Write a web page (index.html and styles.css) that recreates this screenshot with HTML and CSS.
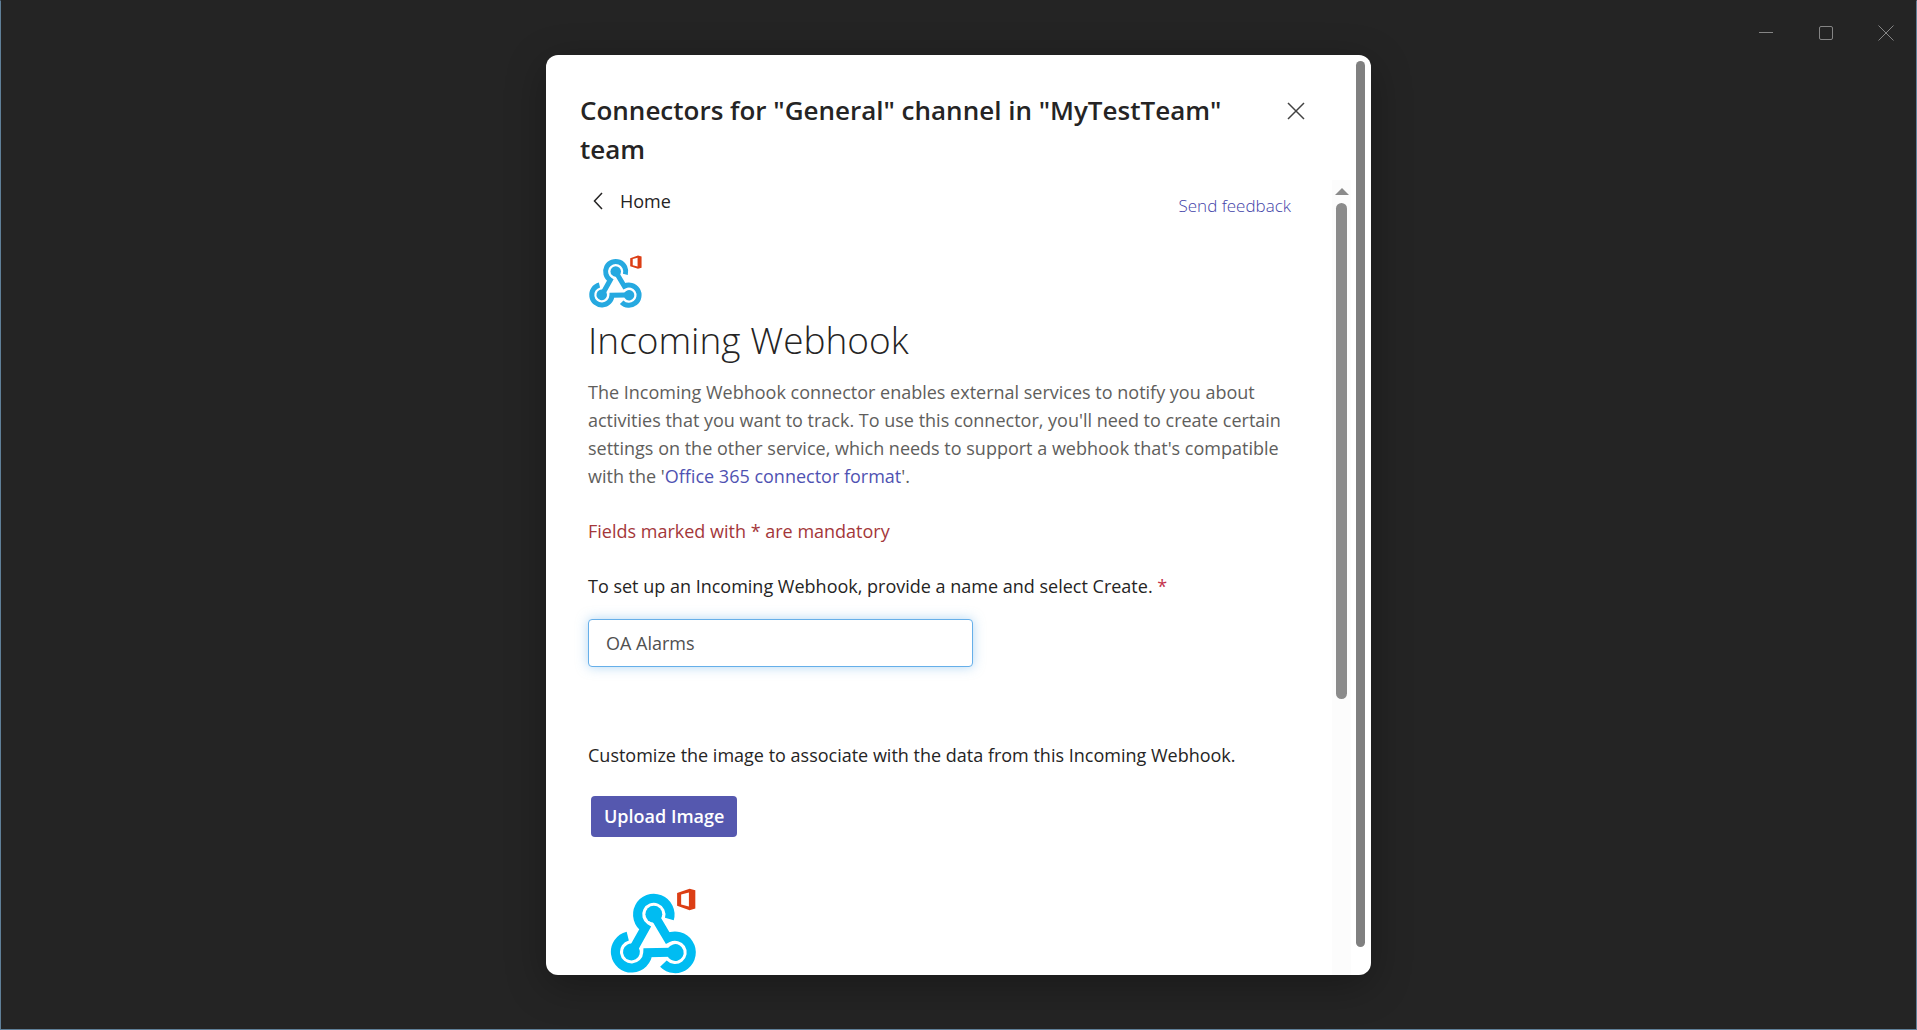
FILE: index.html
```html
<!DOCTYPE html>
<html lang="en">
<head>
<meta charset="utf-8">
<meta name="viewport" content="width=device-width, initial-scale=1">
<title>Connectors</title>
<link rel="stylesheet" href="styles.css">
</head>
<body>
<svg class="sprite" aria-hidden="true">
  <symbol id="webhook" viewBox="92 57 258 258">
    <g fill="none" stroke="currentColor">
      <g id="hook">
        <path d="M268 149A48 48 0 1 0 196 176L163 235"/>
        <circle cx="222" cy="135" r="25" fill="currentColor" stroke="none"/>
      </g>
      <use href="#hook" transform="rotate(-120 221 210)"/>
      <use href="#hook" transform="rotate(120 221 210)"/>
    </g>
    <path fill="#dc3e15" fill-rule="evenodd" d="M291 72L328 59L345 64V118L328 123L291 110ZM303 76V106L326 112V70Z"/>
  </symbol>
</svg>
<div class="window">
  <div class="window-controls">
    <button type="button" aria-label="Minimize"><svg viewBox="0 0 16 16"><path d="M1 7.5H15"/></svg></button>
    <button type="button" aria-label="Maximize"><svg viewBox="0 0 16 16"><rect x="1.5" y="1.5" width="13" height="13" rx="1.5"/></svg></button>
    <button type="button" aria-label="Close window"><svg viewBox="0 0 16 16"><path d="M.5 .5L15.5 15.5M15.5 .5L.5 15.5"/></svg></button>
  </div>
  <main class="dialog" role="dialog" aria-labelledby="title">
    <div class="dialog-main">
      <header class="dialog-header">
        <h1 id="title">Connectors for "General" channel in "MyTestTeam" team</h1>
        <button class="close" type="button" aria-label="Close"><svg viewBox="0 0 18 18"><path d="M1 1L17 17M17 1L1 17"/></svg></button>
      </header>
      <div class="viewport">
        <div class="content">
          <nav class="topline">
            <a class="home" href="#"><svg viewBox="0 0 10 18"><path d="M9 1L1.5 9L9 17"/></svg>Home</a>
            <a class="feedback" href="#">Send feedback</a>
          </nav>
          <svg class="logo" role="img" aria-label="Webhook"><use href="#webhook"/></svg>
          <h2>Incoming Webhook</h2>
          <p class="intro">The Incoming Webhook connector enables external services to notify you about activities that you want to track. To use this connector, you'll need to create certain settings on the other service, which needs to support a webhook that's compatible with the '<a href="#">Office 365 connector format</a>'.</p>
          <p class="mandatory">Fields marked with * are mandatory</p>
          <label for="name">To set up an Incoming Webhook, provide a name and select Create. <span class="star">*</span></label>
          <input id="name" type="text" value="OA Alarms">
          <p class="customize">Customize the image to associate with the data from this Incoming Webhook.</p>
          <button class="upload" type="button">Upload Image</button>
          <svg class="preview" role="img" aria-label="Webhook image"><use href="#webhook"/></svg>
        </div>
        <div class="track"><span class="arrow"></span><span class="thumb"></span></div>
      </div>
    </div>
    <div class="outer-thumb"></div>
  </main>
</div>
</body>
</html>
```
FILE: styles.css
```css
* { box-sizing: border-box; }
body {
  margin: 0;
  font-family: "Open Sans", "Noto Sans", sans-serif;
  font-size: 18px;
  line-height: 28px;
  color: #252424;
}
h1, h2, p { margin: 0; }
a { color: #4f52b2; text-decoration: none; }
button { font: inherit; border: 0; background: none; padding: 0; cursor: pointer; }
svg { display: block; }
.sprite { position: absolute; width: 0; height: 0; }

.window {
  position: relative;
  height: 100vh;
  display: flex;
  justify-content: center;
  padding: 54px 16px;
  background: #242424;
  border: 1px solid #5f7f98;
  border-top-color: #242424;
}
.window-controls {
  position: absolute;
  top: 24px;
  right: 22px;
  display: flex;
  gap: 44px;
}
.window-controls svg { width: 16px; height: 16px; fill: none; stroke: #858585; }

.dialog {
  width: 100%;
  max-width: 825px;
  display: flex;
  overflow: hidden;
  background: #fff;
  border-radius: 12px;
  box-shadow: 0 10px 40px rgba(0, 0, 0, .3);
}
.outer-thumb {
  flex: none;
  width: 9px;
  margin: 6px 6px 28px 5px;
  border-radius: 5px;
  background: #808080;
}
.dialog-main { flex: 1; min-width: 0; display: flex; flex-direction: column; }
.dialog-header {
  display: flex;
  justify-content: space-between;
  align-items: flex-start;
  padding: 36px 46px 11px 34px;
}
h1 { font-size: 26px; line-height: 39px; font-weight: 600; max-width: 660px; }
.close { padding: 11px 0; }
.close svg { width: 18px; height: 18px; fill: none; stroke: #424242; stroke-width: 1.5; }

.viewport { flex: 1; min-height: 0; display: flex; }
.content {
  flex: 1;
  min-width: 0;
  overflow: hidden;
  display: flex;
  flex-direction: column;
  align-items: flex-start;
  padding: 7px 41px 0 42px;
}
.topline {
  align-self: stretch;
  display: flex;
  justify-content: space-between;
  align-items: flex-start;
  margin-bottom: 35px;
}
.home { display: flex; align-items: center; gap: 17px; padding-left: 5px; color: #252424; }
.home svg { width: 10px; height: 18px; fill: none; stroke: #252424; stroke-width: 1.5; }
.feedback { padding-top: 5px; font-size: 17px; font-weight: 300; color: #3f42a8; }
.logo { width: 55px; height: 55px; color: #26a9e0; stroke-width: 24; }
h2 { margin: 5px 0 12px; font-size: 37px; line-height: 52px; font-weight: 300; }
.intro { color: #605e5c; }
.mandatory { margin: 27px 0; color: #a4373a; }
.star { color: #c4314b; }
input {
  width: 385px;
  max-width: 100%;
  height: 48px;
  margin: 19px 0 74px;
  padding: 0 17px;
  font: inherit;
  color: #505050;
  border: 1px solid #66afe9;
  border-radius: 4px;
  outline: 0;
  box-shadow: 0 0 12px rgba(102, 175, 233, .5);
}
.upload {
  height: 42px;
  margin: 27px 3px 51px;
  padding: 0 13px;
  font-weight: 600;
  color: #fff;
  background: #5558af;
  border-radius: 4px;
}
.preview { flex: none; width: 87px; height: 87px; margin-left: 22px; color: #00bcf2; stroke-width: 27; }

.track {
  flex: none;
  width: 19px;
  padding-top: 8px;
  display: flex;
  flex-direction: column;
  align-items: center;
  gap: 8px;
  background: #fcfcfc;
}
.arrow { border: 7px solid transparent; border-top: 0; border-bottom-color: #8b8b8b; }
.thumb { width: 11px; height: 63%; border-radius: 6px; background: #8b8b8b; }
```
